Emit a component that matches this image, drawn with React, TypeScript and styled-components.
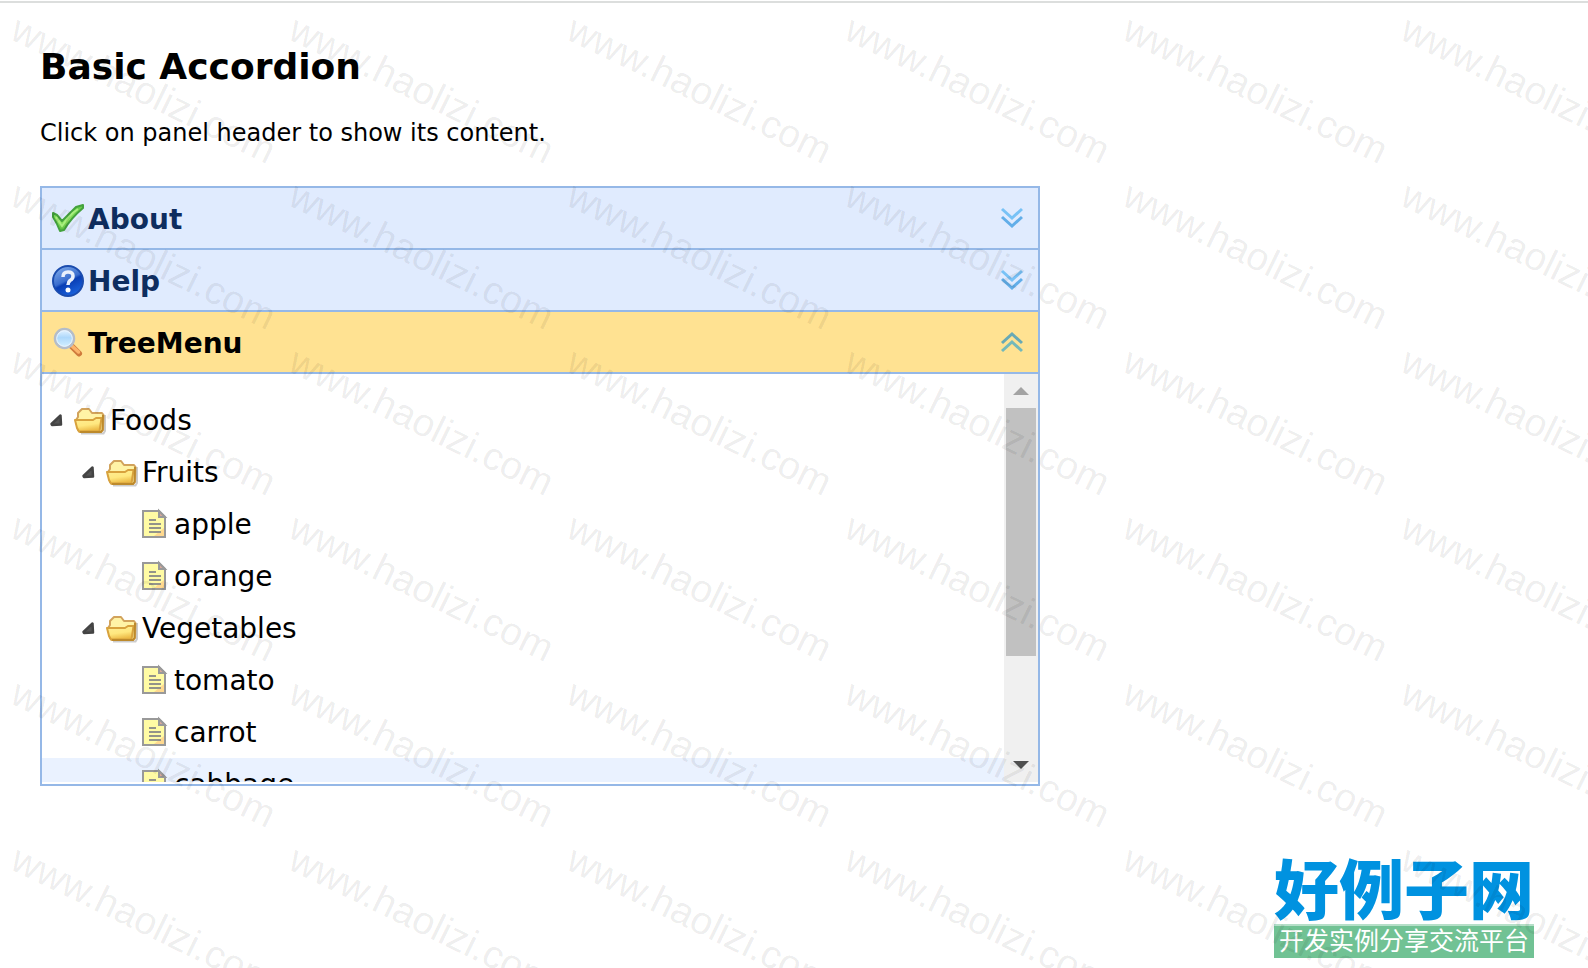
import React, { useState } from "react";
import styled, { createGlobalStyle } from "styled-components";

const GlobalStyle = createGlobalStyle`
  * { box-sizing: border-box; }
  body {
    margin: 0;
    background: #fff;
    color: #000;
    font-family: Verdana, "DejaVu Sans", sans-serif;
  }
`;

const Page = styled.div`
  position: relative;
  min-height: 100vh;
  padding-top: 1px;
  overflow: hidden;
`;

const TopLine = styled.div`
  height: 2px;
  background: #dcdedd;
`;

const Main = styled.main`
  padding: 42px 40px 40px;
`;

const Title = styled.h2`
  margin: 0 0 29px;
  font-size: 36px;
  line-height: 44px;
`;

const Intro = styled.p`
  margin: 0 0 38px;
  font-size: 24px;
  line-height: 30px;
`;

const Accordion = styled.section`
  display: flex;
  flex-direction: column;
  max-width: 1000px;
  height: 600px;
  border: 2px solid #95b8e7;
`;

const PanelHeader = styled.button<{ $open: boolean }>`
  display: flex;
  flex: none;
  align-items: center;
  gap: 4px;
  width: 100%;
  height: 62px;
  padding: 2px 14px 0 10px;
  border: 0;
  border-bottom: 2px solid #95b8e7;
  background: ${(p) => (p.$open ? "#ffe292" : "#e0ebfe")};
  color: ${(p) => (p.$open ? "#000" : "#0e2d5f")};
  font: bold 28px/32px Verdana, "DejaVu Sans", sans-serif;
  text-align: left;
  cursor: pointer;
`;

const PanelTitle = styled.span`
  flex: 1;
  padding-top: 2px;
`;

const PanelBody = styled.div`
  display: flex;
  flex: 1;
  min-height: 0;
  padding-bottom: 2px;
`;

const Tree = styled.ul`
  flex: 1;
  margin: 0;
  padding: 20px 0 0;
  overflow: hidden;
  list-style: none;
  font-size: 28px;
`;

const TreeNode = styled.li<{ $level: number; $hover?: boolean }>`
  display: flex;
  align-items: center;
  gap: 4px;
  height: 52px;
  padding-left: ${(p) => p.$level * 32}px;
  background: ${(p) => (p.$hover ? "#eaf2ff" : "transparent")};
`;

const NodeIcons = styled.span`
  display: flex;
`;

const ScrollBar = styled.div`
  display: flex;
  flex: none;
  flex-direction: column;
  align-items: center;
  width: 34px;
  background: #f0f0f0;
`;

const ScrollArrow = styled.span`
  display: flex;
  align-items: center;
  justify-content: center;
  height: 34px;
`;

const ScrollTrack = styled.div`
  flex: 1;
`;

const ScrollThumb = styled.div`
  width: 30px;
  height: 248px;
  background: #c1c1c1;
`;

const Logo = styled.div`
  position: absolute;
  right: 54px;
  bottom: 10px;
  width: 260px;
  font-family: "Noto Sans CJK SC", sans-serif;
  white-space: nowrap;
`;

const LogoName = styled.div`
  color: #0092e0;
  font-size: 65px;
  font-weight: 900;
  line-height: 76px;
`;

const LogoSlogan = styled.div`
  height: 34px;
  border-top: 2px solid #b5dfc8;
  background: #71c294;
  color: #fff;
  font-size: 25px;
  line-height: 26px;
  text-align: center;
`;

const Watermark = styled.div`
  position: absolute;
  inset: 0;
  display: grid;
  grid-template-columns: repeat(6, 278px);
  grid-auto-rows: 166px;
  pointer-events: none;
`;

const Mark = styled.span`
  display: flex;
  align-items: center;
  justify-content: center;
  padding: 8px 0 0 14px;
  color: rgba(0, 0, 0, 0.08);
  font: 39px/40px "Liberation Sans", Arial, sans-serif;
  transform: rotate(26deg);
`;

const CheckIcon = () => (
  <svg width="32" height="32" viewBox="0 0 32 32" aria-hidden="true">
    <defs>
      <linearGradient id="leaf" x1="0" y1="0" x2="0" y2="1">
        <stop offset="0" stopColor="#5fc845" />
        <stop offset="0.6" stopColor="#8ee45f" />
        <stop offset="1" stopColor="#55b83c" />
      </linearGradient>
    </defs>
    <path d="M1 10 L5 12 L10 18 L24 4 L31 2 L31 5 Q19 15 12 27 L8 28 Q5 20 1 14 Z" fill="url(#leaf)" stroke="#44a23e" strokeWidth="2" strokeLinejoin="round" />
    <path d="M4 14 L10 23 Q17 12 26 6" fill="none" stroke="#a9ee80" strokeWidth="2" />
  </svg>
);

const HelpIcon = () => (
  <svg width="32" height="32" viewBox="0 0 32 32" aria-hidden="true">
    <defs>
      <linearGradient id="orb" x1="0.2" y1="0" x2="0.7" y2="1">
        <stop offset="0" stopColor="#7fabea" />
        <stop offset="0.48" stopColor="#3a6dce" />
        <stop offset="0.56" stopColor="#0a3eb4" />
        <stop offset="1" stopColor="#1c66e0" />
      </linearGradient>
    </defs>
    <circle cx="16" cy="16" r="15" fill="url(#orb)" stroke="#1b4cae" strokeWidth="2" />
    <path d="M11 12 Q11 7 16 7 Q21 7 21 11 Q21 14 18 15.5 Q16 17 16 20" fill="none" stroke="#e9f0fc" strokeWidth="3.5" />
    <circle cx="16" cy="25" r="2.5" fill="#fff" />
  </svg>
);

const SearchIcon = () => (
  <svg width="32" height="32" viewBox="0 0 32 32" aria-hidden="true">
    <defs>
      <linearGradient id="lens" x1="0" y1="0" x2="0" y2="1">
        <stop offset="0" stopColor="#eaf5ff" />
        <stop offset="0.45" stopColor="#add8fb" />
        <stop offset="1" stopColor="#d7f2ff" />
      </linearGradient>
    </defs>
    <path d="M20.500 20 L27 26.500" stroke="#cf7a3c" strokeWidth="6" strokeLinecap="round" />
    <path d="M20 19 L26.500 25" stroke="#fcb46a" strokeWidth="3.500" strokeLinecap="round" />
    <circle cx="12.500" cy="11.500" r="9.500" fill="url(#lens)" stroke="#b4bdc9" strokeWidth="2.500" />
    <circle cx="12.500" cy="11.500" r="7.800" fill="none" stroke="#eaf5ff" strokeWidth="1" />
  </svg>
);

const Chevrons = ({ up }: { up: boolean }) => (
  <svg width="24" height="24" viewBox="0 0 24 24" fill="none" strokeWidth="3" aria-hidden="true">
    <path d={up ? "M2 12 L12 3 L22 12" : "M2 2 L12 11 L22 2"} stroke={up ? "#68a9b5" : "#78c2f6"} />
    <path d={up ? "M2 20 L12 11 L22 20" : "M2 10 L12 19 L22 10"} stroke={up ? "#74b9ba" : "#62aee9"} />
  </svg>
);

const ExpandArrow = () => (
  <svg width="32" height="32" viewBox="0 0 32 32" aria-hidden="true">
    <path d="M9.500 20 L18.500 11.500 L19 20.500 L10 21 Z" fill="#555" stroke="#444" strokeWidth="2.500" strokeLinejoin="round" />
  </svg>
);

const FolderIcon = () => (
  <svg width="32" height="32" viewBox="0 0 32 32" aria-hidden="true">
    <defs>
      <linearGradient id="flap" x1="0" y1="0" x2="0.3" y2="1">
        <stop offset="0" stopColor="#ffee96" />
        <stop offset="0.6" stopColor="#ffe87f" />
        <stop offset="1" stopColor="#edbc48" />
      </linearGradient>
    </defs>
    <path d="M7 29.500 L29.500 29.500 L31 27 L31 11" fill="none" stroke="#000" strokeOpacity="0.2" strokeWidth="2" />
    <path d="M4 26 L2 16 L4 13 L4 9 L8 5 L15 5 L18 9 L28 9 L29.500 11 L29 26 L27 28 L6 28 Z" fill="#fff3a6" stroke="#d2a35c" strokeWidth="2" strokeLinejoin="round" />
    <path d="M1 16 L19 16 L22 14 L27.500 14 L25.500 27.500 L5 27.500 L3 24 Z" fill="url(#flap)" stroke="#d8a23d" strokeWidth="2" strokeLinejoin="round" />
    <path d="M29 11 L28.500 26 L27 28 L6 28" fill="none" stroke="#bd8a2c" strokeWidth="2" />
  </svg>
);

const FileIcon = () => (
  <svg width="32" height="32" viewBox="0 0 32 32" aria-hidden="true">
    <path d="M5 3 L21 3 L27 9 L27 29 L5 29 Z" fill="#fffba4" stroke="#999" strokeWidth="2" />
    <path d="M16 28 L26 20 L26 28 Z" fill="#ffd98f" />
    <path d="M21 3 L21 9 L27 9 Z" fill="#d9a99a" stroke="#999" strokeWidth="2" />
    <path d="M11 12 H18 M11 16 H23 M11 20 H23 M11 24 H23" stroke="#94948a" strokeWidth="2" />
  </svg>
);

const panels = [
  { title: "About", Icon: CheckIcon },
  { title: "Help", Icon: HelpIcon },
  { title: "TreeMenu", Icon: SearchIcon },
];

const nodes = [
  { label: "Foods", level: 0, folder: true },
  { label: "Fruits", level: 1, folder: true },
  { label: "apple", level: 3, folder: false },
  { label: "orange", level: 3, folder: false },
  { label: "Vegetables", level: 1, folder: true },
  { label: "tomato", level: 3, folder: false },
  { label: "carrot", level: 3, folder: false },
  { label: "cabbage", level: 3, folder: false, hover: true },
];

export default function App() {
  const [open, setOpen] = useState("TreeMenu");
  return (
    <>
      <GlobalStyle />
      <Page>
        <TopLine />
        <Main>
          <Title>Basic Accordion</Title>
          <Intro>Click on panel header to show its content.</Intro>
          <Accordion>
            {panels.map(({ title, Icon }) => (
              <PanelHeader key={title} type="button" $open={open === title} aria-expanded={open === title} onClick={() => setOpen(title)}>
                <Icon />
                <PanelTitle>{title}</PanelTitle>
                <Chevrons up={open === title} />
              </PanelHeader>
            ))}
            {open === "TreeMenu" && (
              <PanelBody>
                <Tree>
                  {nodes.map((n) => (
                    <TreeNode key={n.label} $level={n.level} $hover={n.hover}>
                      <NodeIcons>
                        {n.folder && <ExpandArrow />}
                        {n.folder ? <FolderIcon /> : <FileIcon />}
                      </NodeIcons>
                      {n.label}
                    </TreeNode>
                  ))}
                </Tree>
                <ScrollBar aria-hidden="true">
                  <ScrollArrow>
                    <svg width="16" height="8" viewBox="0 0 16 8"><path d="M0 8 L8 0 L16 8 Z" fill="#a3a3a3" /></svg>
                  </ScrollArrow>
                  <ScrollTrack><ScrollThumb /></ScrollTrack>
                  <ScrollArrow>
                    <svg width="16" height="8" viewBox="0 0 16 8"><path d="M0 0 L8 8 L16 0 Z" fill="#505050" /></svg>
                  </ScrollArrow>
                </ScrollBar>
              </PanelBody>
            )}
          </Accordion>
        </Main>
        <Logo>
          <LogoName>好例子网</LogoName>
          <LogoSlogan>开发实例分享交流平台</LogoSlogan>
        </Logo>
        <Watermark aria-hidden="true">
          {Array.from({ length: 36 }, (_, i) => (
            <Mark key={i}>www.haolizi.com</Mark>
          ))}
        </Watermark>
      </Page>
    </>
  );
}
